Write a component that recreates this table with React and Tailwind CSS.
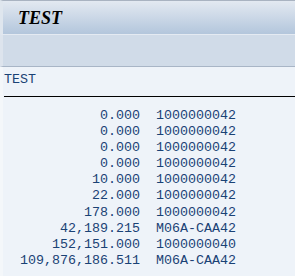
export default function App() {
  const rows = [
    ["0.000", "1000000042"],
    ["0.000", "1000000042"],
    ["0.000", "1000000042"],
    ["0.000", "1000000042"],
    ["10.000", "1000000042"],
    ["22.000", "1000000042"],
    ["178.000", "1000000042"],
    ["42,189.215", "M06A-CAA42"],
    ["152,151.000", "1000000040"],
    ["109,876,186.511", "M06A-CAA42"],
  ];
  const mono = { fontFamily: '"Liberation Mono", "DejaVu Sans Mono", monospace' };
  return (
    <div className="w-[295px] h-[276px] overflow-hidden bg-[#eef3f9] flex flex-col">
      <div className="h-[34px] shrink-0 border-t border-[#a9b3c1] bg-gradient-to-b from-[#e3e9f1] to-[#b3c6dc] flex items-center border-l-[3px] border-l-[#dfe6ee]">
        <span
          className="pl-[15px] text-[18px] font-bold italic text-black leading-none"
          style={{ fontFamily: '"Liberation Serif", "Times New Roman", serif' }}
        >
          TEST
        </span>
      </div>
      <div className="h-[33px] shrink-0 bg-[#d0dbe8] border-t border-[#e4eaf2] border-b border-b-[#a8b5c6] border-l-[3px] border-l-[#dde4ed]"></div>
      <div className="flex-1 flex flex-col bg-[#eef3f9] border-l-[3px] border-l-[#f4f7fa]">
        <div className="pt-[5px] pl-[1px] h-[29px] text-[13.33px] leading-[16px] text-[#1a4275]" style={mono}>
          TEST
        </div>
        <div className="ml-[1px] h-px bg-black"></div>
        <div className="pt-[11px] pl-[1px] text-[13.33px] leading-[16.1px] text-[#1a4275] whitespace-pre" style={mono}>
          {rows.map((r, i) => (
            <div key={i}>{r[0].padStart(17, " ") + "  " + r[1]}</div>
          ))}
        </div>
      </div>
    </div>
  );
}
